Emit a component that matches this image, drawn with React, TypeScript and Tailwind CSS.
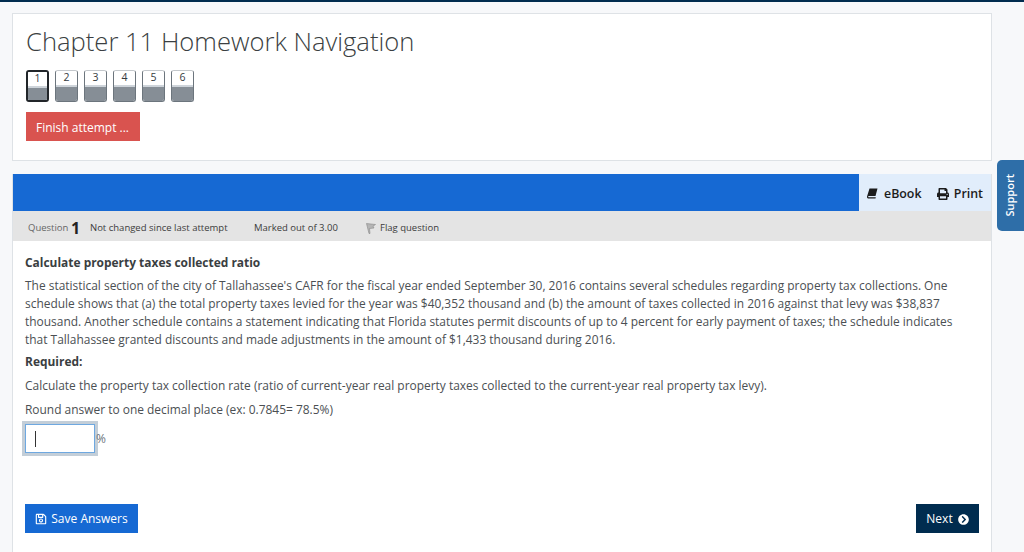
import { FaChevronCircleRight, FaPrint, FaRegSave } from "react-icons/fa";

const pages = ["1", "2", "3", "4", "5", "6"];

function NavButton({ label, current }: { label: string; current: boolean }) {
  return (
    <div
      className={
        current
          ? "w-[23px] h-8 rounded-[3px] border-2 border-[#212529] overflow-hidden flex flex-col"
          : "w-[23px] h-8 rounded-[3px] border border-[#6c757d] border-t-[#c4c8cc] overflow-hidden flex flex-col"
      }
    >
      <div className="h-4 shrink-0 bg-white border-b-2 border-[#ced4da] text-[10.5px] leading-[13px] text-center text-[#343a40]">
        {label}
      </div>
      <div className="flex-1 bg-[#868e96]" />
    </div>
  );
}

export default function App() {
  return (
    <div className="relative w-[1024px] h-[552px] overflow-hidden bg-[#f7f8fa] border-t-2 border-[#002c4f] font-['Open_Sans',sans-serif] text-[#373a3c]">
      <div className="pl-3 pr-8 pt-[11px]">
        <div className="h-[148px] bg-white border border-[#dee2e6] pl-[13px] pt-[11px]">
          <h1 className="text-[25.6px] leading-[34px] font-light text-[#3b3f42]">Chapter 11 Homework Navigation</h1>
          <div className="flex gap-[6px] mt-[11px]">
            {pages.map((p, i) => (
              <NavButton key={p} label={p} current={i === 0} />
            ))}
          </div>
          <button className="mt-[10px] h-[29px] w-[114px] bg-[#d9534f] text-white text-[12px] pt-[2px] pr-[1px] text-center">
            Finish attempt ...
          </button>
        </div>

        <div className="mt-[13px] h-[379px] bg-white border-l border-r border-[#dee2e6]">
          <div className="h-[37px] bg-[#1669d3] flex justify-end">
            <div className="w-[132px] bg-[#e1edfb] flex items-center justify-between pl-[8px] pr-[8px] pt-[3px] text-[12.4px] font-semibold text-[#1c1c1c]">
              <span className="flex items-center gap-[6px]">
                <svg width="11" height="11" viewBox="0 0 11 11">
                  <path d="M2.5 0.5 L10.5 0.5 L8.5 8 L1.5 8 Q0.8 9 1.5 9.3 L8.8 9.3 L8.5 10.5 L1 10.5 Q-0.5 9.8 0.2 8 Z" fill="#1c1c1c" />
                </svg>
                eBook
              </span>
              <span className="flex items-center gap-[5px]">
                <FaPrint className="text-[12px]" />
                Print
              </span>
            </div>
          </div>
          <div className="h-[30px] bg-[#e4e4e4] flex items-center pl-[15px] pt-[5px] text-[9.5px] text-[#3c3c3c]">
            <span className="text-[#666] w-[43px]">Question</span>
            <span className="text-[16px] font-bold leading-none text-[#222] w-[19px] -mt-[2px]">1</span>
            <span className="w-[164px]">Not changed since last attempt</span>
            <span className="w-[112px]">Marked out of 3.00</span>
            <span className="flex items-center gap-[4px]">
              <svg width="10" height="11" viewBox="0 0 10 11">
                <path d="M0.5 0.5 L9.5 1.5 L7 3.2 L8 5 L3.5 5.5 L4 10.5 L3 10.5 Z" fill="#b5b5b5" stroke="#888" strokeWidth="0.6" />
              </svg>
              Flag question
            </span>
          </div>
          <div className="pl-[12px] pr-[30px] pt-[13px] text-[11.95px] leading-[18px] text-[#4b4f53]">
            <p className="font-bold text-[#3a3e41]">Calculate property taxes collected ratio</p>
            <p className="mt-[5px]">
              The statistical section of the city of Tallahassee's CAFR for the fiscal year ended September 30, 2016 contains several schedules regarding property tax collections. One schedule shows that (a) the total property taxes levied for the year was $40,352 thousand and (b) the amount of taxes collected in 2016 against that levy was $38,837 thousand. Another schedule contains a statement indicating that Florida statutes permit discounts of up to 4 percent for early payment of taxes; the schedule indicates that Tallahassee granted discounts and made adjustments in the amount of $1,433 thousand during 2016.
            </p>
            <p className="font-bold mt-[4px] text-[#3a3e41]">Required:</p>
            <p className="mt-[6px]">
              Calculate the property tax collection rate (ratio of current-year real property taxes collected to the current-year real property tax levy).
            </p>
            <p className="mt-[6px]">Round answer to one decimal place (ex: 0.7845= 78.5%)</p>
            <div className="flex items-center mt-[5px]">
              <div className="w-[70px] h-[29px] border border-[#6ea8e0] outline-[3px] outline-[#c3ced8] bg-white flex items-center pl-[9px]">
                <div className="w-px h-[16px] bg-[#333]" />
              </div>
              <span className="text-[12px] ml-[1px] text-[#6c757d]">%</span>
            </div>
            <div className="flex justify-between mt-[51px] mr-[-18px]">
              <button className="w-[113px] h-[29px] bg-[#1669d3] text-white text-[12px] flex items-center justify-center gap-[4px] pt-[1px]">
                <FaRegSave className="text-[12px]" />
                Save Answers
              </button>
              <button className="w-[63px] h-[29px] bg-[#002c4f] text-white text-[12px] flex items-center justify-center gap-[5px] pt-[1px]">
                Next
                <FaChevronCircleRight className="text-[11px]" />
              </button>
            </div>
          </div>
        </div>
      </div>

      <div className="absolute right-0 top-[158px] w-[27px] h-[71px] bg-[#2e6ea8] rounded-l-[5px] flex items-center justify-center">
        <span className="[writing-mode:vertical-rl] rotate-180 text-white text-[11px] font-semibold">Support</span>
      </div>
    </div>
  );
}
